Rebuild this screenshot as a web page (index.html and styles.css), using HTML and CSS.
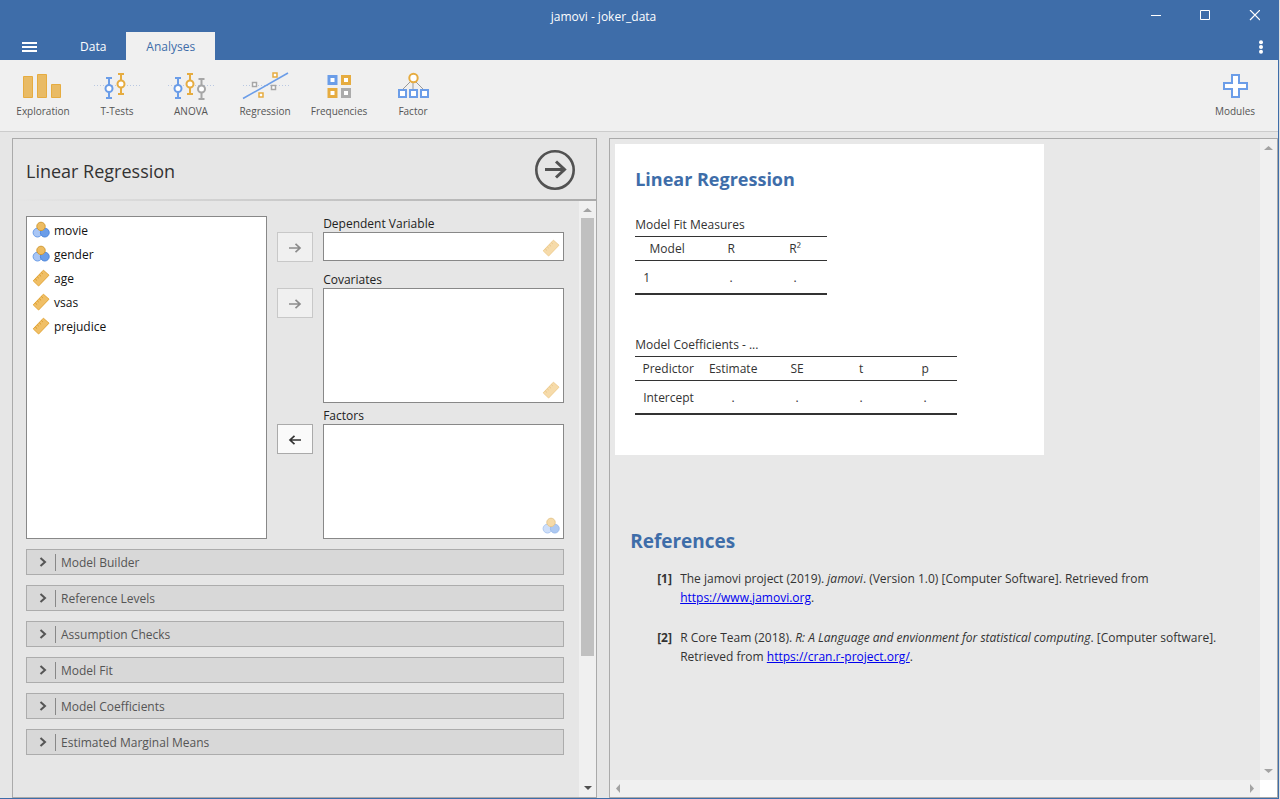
FILE: index.html
```html
<!DOCTYPE html>
<html lang="en">
<head>
<meta charset="utf-8">
<title>jamovi - joker_data</title>
<link rel="stylesheet" href="styles.css">
</head>
<body>
<svg class="defs" aria-hidden="true">
  <symbol id="nominal" viewBox="0 0 18 18">
    <circle cx="5.5" cy="11.6" r="4.4" fill="#a9c6f5" stroke="#6b9de8"/>
    <circle cx="12.8" cy="11.6" r="4.4" fill="#6b9de8" stroke="#4d86dc"/>
    <circle cx="9" cy="5.4" r="4.2" fill="#edbc62" stroke="#d29b36"/>
  </symbol>
  <symbol id="continuous" viewBox="0 0 18 18">
    <path d="M1.2 11.8 11.4 1.2 17 6.2 6.6 17Z" fill="#f0bf66" stroke="#e3a536"/>
    <path d="M3.2 9.8l1.9 1.8M5.2 7.7l1.5 1.4M7.2 5.6l1.9 1.8M9.3 3.5l1.5 1.4" fill="none" stroke="#d99a2b"/>
  </symbol>
  <symbol id="right" viewBox="0 0 14 12"><path d="M1 6h11M7.5 1.8 12 6l-4.5 4.2" fill="none" stroke="currentColor" stroke-width="1.7"/></symbol>
  <symbol id="left" viewBox="0 0 14 12"><path d="M13 6H2M6.5 1.8 2 6l4.5 4.2" fill="none" stroke="currentColor" stroke-width="1.7"/></symbol>
  <symbol id="chevron" viewBox="0 0 8 10"><path d="M1.5 1 6 5 1.5 9" fill="none" stroke="currentColor" stroke-width="2"/></symbol>
</svg>
<div class="app">
  <header class="titlebar">
    <div class="title">jamovi - joker_data</div>
    <button class="win" aria-label="Minimize"><svg width="12" height="12"><path d="M1 5.5h10" stroke="#fff"/></svg></button>
    <button class="win" aria-label="Maximize"><svg width="12" height="12"><path d="M1.5 .5h9v9h-9z" fill="none" stroke="#fff"/></svg></button>
    <button class="win" aria-label="Close"><svg width="12" height="12"><path d="M2 0l10 10M12 0 2 10" stroke="#fff" stroke-width="1.2"/></svg></button>
  </header>
  <nav class="tabs">
    <button class="menu" aria-label="Menu"><svg width="15" height="10"><path d="M0 1h15M0 5h15M0 9h15" stroke="#fff" stroke-width="2"/></svg></button>
    <button class="tab">Data</button>
    <button class="tab active">Analyses</button>
    <button class="more" aria-label="More options"><svg width="6" height="14" fill="#fff"><circle cx="3" cy="2.2" r="2"/><circle cx="3" cy="7" r="2"/><circle cx="3" cy="11.8" r="2"/></svg></button>
  </nav>
  <div class="ribbon">
    <button class="tool"><svg width="48" height="32" viewBox="0 0 48 32"><g fill="#e9bb65" stroke="#e6ac40"><path d="M4.500 6.500h9v21h-9zM18.500 4.500h9v23h-9zM32.500 14.500h9v13h-9z"/></g></svg>Exploration</button>
    <button class="tool"><svg width="48" height="32" viewBox="0 0 48 32"><path d="M1 15.500h46" stroke="#b9c8e2" stroke-dasharray="1 2"/><g fill="#fff" stroke="#6b9de8" stroke-width="2"><path d="M16 8v20M13 8h6M13 28h6"/><circle cx="16" cy="18.500" r="3.500"/></g><g fill="#fff" stroke="#e6ac40" stroke-width="2"><path d="M28 4v20M25 4h6M25 24h6"/><circle cx="28" cy="14" r="3.500"/></g></svg>T-Tests</button>
    <button class="tool"><svg width="48" height="32" viewBox="0 0 48 32"><path d="M1 15.500h46" stroke="#b9c8e2" stroke-dasharray="1 2"/><g fill="#fff" stroke="#6b9de8" stroke-width="2"><path d="M11 8v20M8 8h6M8 28h6"/><circle cx="11" cy="18.500" r="3.500"/></g><g fill="#fff" stroke="#e6ac40" stroke-width="2"><path d="M23 4v20M20 4h6M20 24h6"/><circle cx="23" cy="14" r="3.500"/></g><g fill="#fff" stroke="#a6a6a6" stroke-width="2"><path d="M34.500 9v20M31.500 9h6M31.500 29h6"/><circle cx="34.500" cy="19" r="3.500"/></g></svg>ANOVA</button>
    <button class="tool"><svg width="48" height="32" viewBox="0 0 48 32"><path d="M2 15.500h46" stroke="#b9c8e2" stroke-dasharray="1 2"/><path d="M2 28.500 47 3" stroke="#6b9de8" stroke-width="1.500"/><g fill="#fff" stroke-width="1.500"><path stroke="#e6ac40" d="M32 3h4v4h-4zM18 23h4v4h-4z"/><path stroke="#a6a6a6" d="M11.500 12.500h4v4h-4zM30.500 15.500h4v4h-4z"/></g></svg>Regression</button>
    <button class="tool"><svg width="48" height="32" viewBox="0 0 48 32"><g fill="#fff" stroke-width="3"><path stroke="#6b9de8" d="M14 6.500h7v7h-7z"/><path stroke="#e6ac40" d="M27.500 6.500h7v7h-7zM14 19.500h7v7h-7z"/><path stroke="#ababab" d="M27.500 19.500h7v7h-7z"/></g></svg>Frequencies</button>
    <button class="tool"><svg width="48" height="32" viewBox="0 0 48 32"><path d="M24 9 13 20M24 9v11M24 9l11 11" stroke="#999"/><g fill="#fff" stroke-width="2"><path stroke="#6b9de8" d="M10 20h7v7h-7zM21 20h7v7h-7zM32 20h7v7h-7z"/><circle cx="24.500" cy="8" r="4.200" stroke="#e6ac40"/></g></svg>Factor</button>
    <button class="tool modules"><svg width="48" height="32" viewBox="0 0 48 32"><path d="M21 5h7v8h8v6h-8v8h-7v-8h-8v-6h8z" fill="#fff" stroke="#6b9de8" stroke-width="2"/></svg>Modules</button>
  </div>
  <main class="panels">
    <section class="panel options">
      <div class="options-head">
        <h1>Linear Regression</h1>
        <button class="go" aria-label="Close options"><svg width="42" height="42" fill="none" stroke="#525252"><circle cx="21" cy="21" r="18.700" stroke-width="2.600"/><path d="M11 20.500h19M22 12.500l8.500 8-8.500 8" stroke-width="3"/></svg></button>
      </div>
      <div class="scroller">
        <div class="form">
          <div class="assign">
            <ul class="box variables" aria-label="Variables">
              <li><svg class="vi"><use href="#nominal"/></svg><span>movie</span></li>
              <li><svg class="vi"><use href="#nominal"/></svg><span>gender</span></li>
              <li><svg class="vi"><use href="#continuous"/></svg><span>age</span></li>
              <li><svg class="vi"><use href="#continuous"/></svg><span>vsas</span></li>
              <li><svg class="vi"><use href="#continuous"/></svg><span>prejudice</span></li>
            </ul>
            <div class="targets">
              <div class="target">
                <button class="move" disabled aria-label="Assign dependent variable"><svg class="ar"><use href="#right"/></svg></button>
                <div class="field"><h2 id="dep">Dependent Variable</h2><div class="box drop single" role="listbox" aria-labelledby="dep"><svg class="vi"><use href="#continuous"/></svg></div></div>
              </div>
              <div class="target">
                <button class="move" disabled aria-label="Assign covariates"><svg class="ar"><use href="#right"/></svg></button>
                <div class="field"><h2 id="cov">Covariates</h2><div class="box drop" role="listbox" aria-labelledby="cov"><svg class="vi"><use href="#continuous"/></svg></div></div>
              </div>
              <div class="target last">
                <button class="move" aria-label="Remove factors"><svg class="ar"><use href="#left"/></svg></button>
                <div class="field"><h2 id="fac">Factors</h2><div class="box drop" role="listbox" aria-labelledby="fac"><svg class="vi"><use href="#nominal"/></svg></div></div>
              </div>
            </div>
          </div>
          <button class="fold"><svg class="ch"><use href="#chevron"/></svg><span>Model Builder</span></button>
          <button class="fold"><svg class="ch"><use href="#chevron"/></svg><span>Reference Levels</span></button>
          <button class="fold"><svg class="ch"><use href="#chevron"/></svg><span>Assumption Checks</span></button>
          <button class="fold"><svg class="ch"><use href="#chevron"/></svg><span>Model Fit</span></button>
          <button class="fold"><svg class="ch"><use href="#chevron"/></svg><span>Model Coefficients</span></button>
          <button class="fold"><svg class="ch"><use href="#chevron"/></svg><span>Estimated Marginal Means</span></button>
        </div>
        <div class="vbar" aria-hidden="true">
          <svg width="17" height="17"><path d="M4 11h9L8.500 7z" fill="#a3a3a3"/></svg>
          <div class="track"><div class="thumb"></div></div>
          <svg width="17" height="17"><path d="M5 6h8l-4 4z" fill="#505050"/></svg>
        </div>
      </div>
    </section>
    <section class="panel results">
      <div class="view">
        <article class="card">
          <h2>Linear Regression</h2>
          <table class="fit">
            <caption>Model Fit Measures</caption>
            <thead><tr><th>Model</th><th>R</th><th>R²</th></tr></thead>
            <tbody><tr><td>1</td><td>.</td><td>.</td></tr></tbody>
          </table>
          <table class="coef">
            <caption>Model Coefficients - ...</caption>
            <thead><tr><th>Predictor</th><th>Estimate</th><th>SE</th><th>t</th><th>p</th></tr></thead>
            <tbody><tr><td>Intercept</td><td>.</td><td>.</td><td>.</td><td>.</td></tr></tbody>
          </table>
        </article>
        <section class="refs">
          <h2>References</h2>
          <div class="ref"><b>[1]</b><p>The jamovi project (2019). <i>jamovi</i>. (Version 1.0) [Computer Software]. Retrieved from <a href="https://www.jamovi.org">https://www.jamovi.org</a>.</p></div>
          <div class="ref"><b>[2]</b><p>R Core Team (2018). <i>R: A Language and envionment for statistical computing</i>. [Computer software]. Retrieved from <a href="https://cran.r-project.org/">https://cran.r-project.org/</a>.</p></div>
        </section>
      </div>
      <div class="vbar" aria-hidden="true">
        <svg width="17" height="17"><path d="M4 11h9L8.500 7z" fill="#a3a3a3"/></svg>
        <svg width="17" height="17"><path d="M4 6h9l-4.500 4z" fill="#a3a3a3"/></svg>
      </div>
      <div class="hbar" aria-hidden="true">
        <svg width="17" height="17"><path d="M10 4v9L6 8.500z" fill="#a3a3a3"/></svg>
        <svg width="17" height="17"><path d="M7 4v9l4-4.500z" fill="#a3a3a3"/></svg>
      </div>
      <div class="corner"></div>
    </section>
  </main>
</div>
</body>
</html>
```
FILE: styles.css
```css
* { box-sizing: border-box; }
body {
  margin: 0;
  background: #e0e0e0;
  color: #333;
  font: 12px/16px "Open Sans", "Noto Sans", sans-serif;
}
h1, h2, p, ul { margin: 0; padding: 0; }
button {
  margin: 0;
  padding: 0;
  border: 0;
  background: none;
  color: inherit;
  font: inherit;
}
svg { display: block; flex: none; }
.defs { position: absolute; width: 0; height: 0; }

.app {
  display: flex;
  flex-direction: column;
  height: 100vh;
  margin-right: 1px;
  border-right: 1px solid #3e6da9;
  border-bottom: 1px solid #3e6da9;
  background: #e6e6e6;
}

.titlebar {
  display: flex;
  align-items: center;
  height: 32px;
  background: #3e6da9;
  color: #fff;
}
.title { flex: 1; padding: 2px 0 0 76px; text-align: center; }
.win {
  display: grid;
  place-items: center;
  width: 49px;
  height: 32px;
}

.tabs {
  display: flex;
  height: 28px;
  background: #3e6da9;
  color: #fff;
}
.menu { display: grid; place-items: center; width: 60px; padding: 2px 2px 0 0; }
.tab { padding: 2px 20px 0; }
.tab.active { background: #f0f0f0; color: #3e6da9; }
.more { display: grid; place-items: center; width: 34px; padding-top: 2px; margin-left: auto; }

.ribbon {
  display: flex;
  height: 72px;
  padding: 10px 6px 0;
  border-bottom: 1px solid #ccc;
  background: #f0f0f0;
}
.tool {
  display: flex;
  flex-direction: column;
  align-items: center;
  gap: 1px;
  width: 74px;
  font-size: 10px;
  color: #555;
}
.modules { margin-left: auto; }

.panels {
  display: flex;
  flex: 1;
  gap: 12px;
  min-height: 0;
  padding: 6px 0 0 12px;
}
.panel { min-width: 0; border: 1px solid #aaa; }

.options { display: flex; flex: 585 0 0; flex-direction: column; }
.options-head {
  display: flex;
  align-items: center;
  justify-content: space-between;
  height: 62px;
  padding: 2px 20px 0 13px;
  border-bottom: 2px solid;
  border-image: linear-gradient(to right, #e6e6e6, #aaa) 1;
}
.options-head h1 { padding-top: 2px; font-size: 18px; line-height: 24px; font-weight: 400; }
.scroller { display: flex; flex: 1; min-height: 0; }
.form { flex: 1; padding: 15px 15px 0 13px; overflow: hidden; }

.assign { display: grid; grid-template-columns: 1fr 287px; gap: 10px; }
.box { border: 1px solid #888; background: #fff; }
.variables { padding: 1px 5px; list-style: none; color: #111; }
.variables li { display: flex; align-items: center; gap: 4px; height: 24px; }
.variables span { padding-top: 2px; }
.vi { width: 18px; height: 18px; }
.target { display: grid; grid-template-columns: 36px 1fr; gap: 10px; margin-bottom: 10px; }
.target:nth-child(2) { margin-bottom: 5px; }
.target.last { margin-bottom: 0; }
.field h2 { font-size: 12px; line-height: 16px; font-weight: 400; color: #222; }
.drop {
  display: flex;
  align-items: flex-end;
  justify-content: flex-end;
  height: 115px;
  padding: 3px;
}
.drop.single { height: 29px; }
.drop .vi { opacity: .55; }
.move {
  display: grid;
  place-items: center;
  height: 30px;
  margin-top: 16px;
  padding-top: 2px;
  border: 1px solid #aaa;
  background: #fafafa;
  color: #333;
}
.move:disabled { border-color: #c8c8c8; background: #f0f0f0; color: #8c8c8c; }
.ar { width: 14px; height: 12px; }

.fold {
  display: flex;
  align-items: center;
  width: 100%;
  height: 26px;
  margin-top: 10px;
  padding-left: 12px;
  border: 1px solid #acacac;
  background: #d8d8d8;
  color: #555;
}
.ch { width: 8px; height: 10px; margin-right: 8px; }
.fold span { padding: 1px 0 0 5px; border-left: 1px solid #888; }

.vbar {
  display: flex;
  flex-direction: column;
  justify-content: space-between;
  width: 17px;
  background: #f0f0f0;
}
.track { flex: 1; padding: 0 2px; }
.thumb { height: 78%; background: #c0c0c0; }
.hbar { display: flex; justify-content: space-between; background: #f0f0f0; }
.corner { background: #fff; }

.results {
  display: grid;
  flex: 669 0 0;
  grid-template-columns: 1fr 17px;
  grid-template-rows: 1fr 17px;
}
.view { min-width: 0; padding: 5px; overflow: hidden; background: #e8e8e8; }
.card { max-width: 429px; padding: 20px 20px 40px; background: #fff; }
.card h2, .refs h2 { font-size: 18px; line-height: 30px; font-weight: 700; color: #3e6da9; }
.refs h2 { font-size: 19px; }
table {
  margin-top: 20px;
  border-collapse: separate;
  border-spacing: 0;
  table-layout: fixed;
}
caption { height: 22px; line-height: 22px; text-align: left; white-space: nowrap; }
th, td { padding: 0; text-align: center; font-weight: 400; }
th { width: 64px; height: 25px; border-top: 1px solid #333; border-bottom: 1px solid #333; }
td { height: 34px; padding-top: 2px; border-bottom: 2px solid #333; }
td:first-child { padding-left: 8px; text-align: left; }
.fit { width: 192px; }
.coef { width: 322px; margin-top: 39px; }
.coef th:first-child { width: 66px; }

.refs { padding: 71px 0 0 15px; }
.ref {
  display: grid;
  grid-template-columns: 16px 1fr;
  gap: 7px;
  margin: 13px 0 0 27px;
  line-height: 19px;
}
.ref + .ref { margin-top: 21px; }
.ref a { color: #00e; }
```
